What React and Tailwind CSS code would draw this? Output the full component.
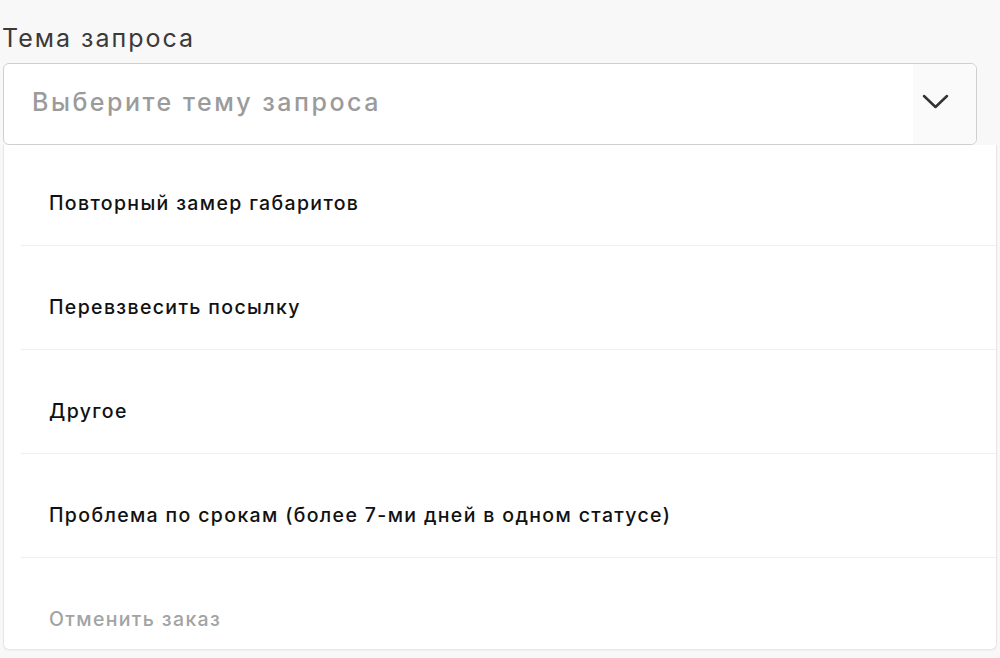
import React from 'react';

const options = [
  { label: 'Повторный замер габаритов' },
  { label: 'Перевзвесить посылку' },
  { label: 'Другое' },
  { label: 'Проблема по срокам (более 7-ми дней в одном статусе)' },
  { label: 'Отменить заказ', disabled: true },
];

export default function App() {
  return (
    <div className="min-h-[658px] bg-[#f8f8f8] pl-[3px] pr-[3px] font-['Inter','Noto_Sans',sans-serif]">
      {/* Label */}
      <div className="pt-[22px] -ml-[1px] text-[25px] leading-[32px] text-[#3a3a3a] tracking-[2px]">
        Тема запроса
      </div>

      {/* Select */}
      <div className="mt-[9px] w-[974px] h-[82px] flex items-stretch bg-white border border-[#cfcfcf] rounded-[6px] overflow-hidden">
        <div className="flex-1 flex items-center pl-[28px] pb-[2px] text-[25px] font-medium text-[#9b9b9b] tracking-[2.5px]">
          Выберите тему запроса
        </div>
        <div className="w-[63px] bg-[#fafafa] flex items-center justify-center pr-[18px] pb-[6px]">
          <svg width="27" height="17" viewBox="0 0 27 17" fill="none">
            <path d="M2 3 L13.5 14 L25 3" stroke="#333" strokeWidth="2.5" strokeLinecap="round" strokeLinejoin="round" />
          </svg>
        </div>
      </div>

      {/* Dropdown */}
      <div className="w-[994px] h-[505px] bg-white border border-t-0 border-[#e6e6e6] rounded-b-[6px] overflow-hidden pl-[17px] shadow-[0_1px_2px_rgba(0,0,0,0.04)]">
        {options.map((o, i) => (
          <div
            key={o.label}
            className={`pl-[28px] pb-[30px] text-[19.5px] leading-[24px] font-medium tracking-[1.35px] ${i === 0 ? 'pt-[46px]' : 'pt-[49px]'} ${i < options.length - 1 ? 'border-b border-[#efefef]' : ''} ${o.disabled ? 'text-[#a3a3a3]' : 'text-[#111]'}`}
          >
            {o.label}
          </div>
        ))}
      </div>
    </div>
  );
}
